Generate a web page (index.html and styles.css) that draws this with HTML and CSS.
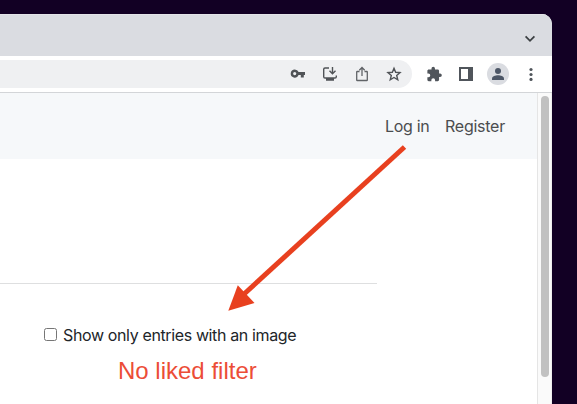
FILE: index.html
```
<!DOCTYPE html>
<html lang="en">
<head>
<meta charset="utf-8">
<title>Entries</title>
<link rel="stylesheet" href="styles.css">
</head>
<body>
<div class="window">
  <div class="tabstrip">
    <svg class="chevron" width="12" height="8" viewBox="0 0 12 8"><path d="M1.6 1.4 6 5.8l4.4-4.4" fill="none" stroke="#3c4043" stroke-width="1.8"/></svg>
  </div>
  <div class="toolbar">
    <div class="omnibox">
      <span class="tool"><svg width="16" height="16" viewBox="0 0 16 16"><path fill="#505357" fill-rule="evenodd" d="M4.800 3.400a4.100 4.100 0 0 1 3.800 2.700H15v3h-1.200v2.400h-3V9.100H8.600A4.100 4.100 0 1 1 4.800 3.400ZM4.700 6a1.600 1.600 0 1 0 0 3.200 1.600 1.600 0 0 0 0-3.200Z"/></svg></span>
      <span class="tool"><svg width="16" height="16" viewBox="0 0 16 16"><path d="M7 2H3Q1.700 2 1.700 3.300v7.400Q1.700 12 3 12h10q1.300 0 1.300-1.300V9.500M10.500 1v6M7.500 4.700l3 3 3-3" fill="none" stroke="#505357" stroke-width="1.400"/><path d="M4 12h8v2.700H4z" fill="#505357"/></svg></span>
      <span class="tool"><svg width="16" height="16" viewBox="0 0 16 16"><path d="M5.500 5.500H3.300q-.6 0-.6.6v7.800q0 .6.6.6h9.400q.6 0 .6-.6V6.100q0-.6-.6-.6h-2.200M8 10V2M5.300 4.200 8 1.500l2.700 2.700" fill="none" stroke="#606367" stroke-width="1.300"/></svg></span>
      <span class="tool"><svg width="16" height="16" viewBox="0 0 16 16"><path d="m8 2.300 1.650 4 4.400.35-3.350 2.850 1.050 4.250L8 11.450l-3.750 2.300L5.300 9.500 1.950 6.650l4.400-.35Z" fill="none" stroke="#505357" stroke-width="1.400"/></svg></span>
    </div>
    <div class="actions">
      <span class="tool"><svg width="16.500" height="16.500" viewBox="0 0 24 24"><path fill="#50555b" d="M20.500 11H19V7c0-1.100-.9-2-2-2h-4V3.500a2.500 2.500 0 0 0-5 0V5H4c-1.100 0-2 .9-2 2v3.800h1.500a2.700 2.700 0 0 1 0 5.400H2V20c0 1.100.9 2 2 2h3.800v-1.500a2.700 2.700 0 0 1 5.400 0V22H17c1.100 0 2-.9 2-2v-4h1.500a2.500 2.500 0 0 0 0-5Z"/></svg></span>
      <span class="tool"><svg width="14" height="14" viewBox="0 0 14 14"><path fill="#50555b" fill-rule="evenodd" d="M0 0h14v14H0zM2 2v10h7V2z"/></svg></span>
      <span class="tool"><span class="avatar"><svg width="12" height="12" viewBox="0 0 12 12"><circle cx="6" cy="3" r="3" fill="#4c5666"/><path d="M0 12v-1.500C0 8.500 3.500 7.300 6 7.300s6 1.200 6 3.200V12Z" fill="#4c5666"/></svg></span></span>
      <span class="tool"><svg width="5" height="14" viewBox="0 0 5 14"><g fill="#50555b"><circle cx="3" cy="2.500" r="1.600"/><circle cx="3" cy="7.500" r="1.600"/><circle cx="3" cy="12.400" r="1.600"/></g></svg></span>
    </div>
  </div>
  <div class="viewport">
    <main class="page">
      <nav class="nav"><a class="login">Log in</a><a class="register">Register</a></nav>
      <div class="divider"></div>
      <label class="filter"><span class="checkbox"></span><span class="filter-text">Show only entries with an image</span></label>
      <div class="note">No liked filter</div>
    </main>
    <div class="scrollbar"><div class="thumb"></div></div>
  </div>
</div>
<svg class="arrow" width="184" height="172" viewBox="0 0 184 172"><path d="M179.500 6 18 154" stroke="#e8401f" stroke-width="5" fill="none"/><path d="M3.300 169.700 12.800 144.200 29.500 162Z" fill="#e8401f"/></svg>
</body>
</html>
```
FILE: styles.css
```
* { box-sizing: border-box; }
body {
  margin: 0;
  height: 404px;
  padding-top: 14px;
  overflow: hidden;
  background: #120024;
  font-family: Inter, "Liberation Sans", sans-serif;
}
svg { display: block; }
.window {
  width: 552px;
  height: 390px;
  display: flex;
  flex-direction: column;
  background: #fff;
  border-radius: 0 10px 0 0;
  overflow: hidden;
}
.tabstrip {
  height: 42px;
  flex: none;
  display: flex;
  justify-content: flex-end;
  padding: 20px 16px 0 0;
  background: #dadce1;
  border-top: 1px solid #e3e4e8;
}
.toolbar {
  height: 37px;
  flex: none;
  display: flex;
  padding: 4px 0;
  gap: 6px;
  border-bottom: 1px solid #d3d5d8;
}
.omnibox {
  width: 412px;
  height: 28px;
  display: flex;
  justify-content: flex-end;
  padding-right: 2px;
  background: #eff0f2;
  border-radius: 0 14px 14px 0;
}
.actions { display: flex; height: 28px; }
.tool {
  width: 32px;
  height: 28px;
  display: flex;
  align-items: center;
  justify-content: center;
}
.avatar {
  width: 22px;
  height: 22px;
  display: flex;
  align-items: center;
  justify-content: center;
  border-radius: 50%;
  background: #dadce1;
}
.viewport { flex: 1; display: flex; }
.page { width: 537px; }
.nav {
  height: 66px;
  display: flex;
  justify-content: flex-end;
  align-items: center;
  gap: 16px;
  padding-right: 32px;
  background: #f6f8fa;
  color: #4b4d4f;
  font-size: 16px;
}
.login { width: 44px; letter-spacing: -0.32px; white-space: nowrap; }
.register { width: 60px; letter-spacing: -0.25px; }
.divider {
  width: 377px;
  height: 1px;
  margin-top: 124px;
  background: #dedfe0;
}
.filter {
  display: flex;
  align-items: center;
  gap: 6px;
  height: 24px;
  margin: 39px 0 0 44px;
  color: #212529;
  font-size: 16px;
}
.checkbox {
  width: 13px;
  height: 13px;
  margin-bottom: 2px;
  border: 1px solid #767676;
  border-radius: 2.5px;
}
.filter-text { letter-spacing: -0.37px; white-space: nowrap; }
.note {
  margin: 10px 0 0 118px;
  font: 24px/28px "Liberation Sans", sans-serif;
  color: #ec4d37;
}
.scrollbar {
  width: 15px;
  padding: 3px 0 0 3px;
  background: #fafafa;
  border-left: 1px solid #e5e5e5;
  border-right: 1px solid #eee;
}
.thumb {
  width: 8px;
  height: 281px;
  border-radius: 4px;
  background: #c1c1c1;
}
.arrow {
  position: absolute;
  left: 225px;
  top: 141px;
}
```
